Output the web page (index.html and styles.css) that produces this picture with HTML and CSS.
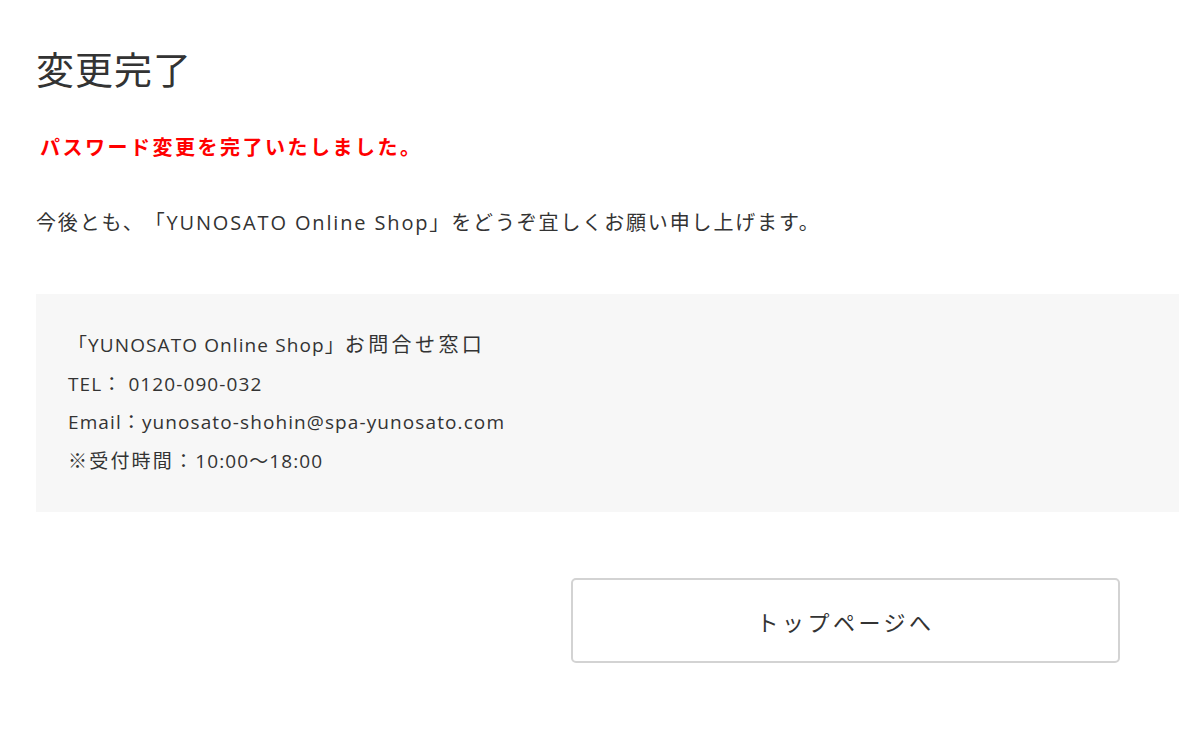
FILE: index.html
```html
<!DOCTYPE html>
<html lang="ja">
<head>
<meta charset="utf-8">
<title>変更完了</title>
<link rel="stylesheet" href="styles.css">
</head>
<body>
<main class="page">
  <h1 class="title">変更完了</h1>
  <p class="notice">パスワード変更を完了いたしました。</p>
  <p class="lead">今後とも、「YUNOSATO Online Shop」をどうぞ宜しくお願い申し上げます。</p>
  <section class="contact">
    <p class="contact-line">「YUNOSATO Online Shop」<span class="jp-wide">お問合せ窓口</span></p>
    <p class="contact-line">TEL： 0120-090-032</p>
    <p class="contact-line">Email：yunosato-shohin@spa-yunosato.com</p>
    <p class="contact-line"><span class="jp-mid">※受付時間：</span>10:00〜18:00</p>
  </section>
  <div class="actions">
    <a class="btn" href="#">トップページへ</a>
  </div>
</main>
</body>
</html>
```
FILE: styles.css
```css
* { box-sizing: border-box; }
html, body { margin: 0; padding: 0; background: #fff; }
body {
  font-family: "Open Sans", "Noto Sans CJK JP", sans-serif;
  color: #333;
  text-spacing-trim: space-all;
}
.page {
  padding: 44px 0 0 36px;
}
.title {
  margin: 0;
  font-family: "Noto Sans CJK JP", sans-serif;
  font-size: 38px;
  font-weight: 400;
  line-height: 48px;
  letter-spacing: 1px;
  color: #333;
}
.notice {
  margin: 41px 0 0 4px;
  font-family: "Noto Sans CJK JP", sans-serif;
  font-size: 20px;
  line-height: 28px;
  font-weight: 700;
  letter-spacing: 2.5px;
  color: #f00;
}
.lead {
  margin: 47px 0 0 0;
  font-size: 20px;
  line-height: 30px;
  letter-spacing: 1.85px;
  color: #333;
}
.contact {
  margin-top: 56px;
  background: #f7f7f7;
  height: 218px;
  padding: 32px 0 0 32px;
}
.contact-line {
  margin: 0;
  font-size: 19px;
  line-height: 38.5px;
  letter-spacing: 1.1px;
  color: #333;
}
.jp-wide {
  font-size: 20px;
  letter-spacing: 3.4px;
}
.jp-mid {
  letter-spacing: 2.2px;
}
.actions {
  margin-top: 66px;
  padding-left: 535px;
}
.btn {
  display: flex;
  align-items: center;
  justify-content: center;
  width: 549px;
  height: 85px;
  border: 2px solid #d3d3d3;
  border-radius: 5px;
  font-family: "Noto Sans CJK JP", sans-serif;
  font-size: 22px;
  letter-spacing: 3.5px;
  color: #333;
  text-decoration: none;
}
```
